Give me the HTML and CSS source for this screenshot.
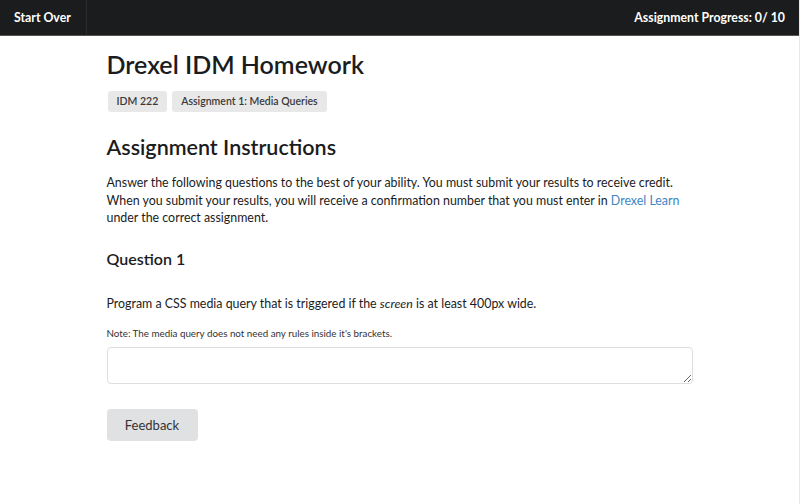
FILE: index.html
```html
<!DOCTYPE html>
<html>
<head>
<meta charset="utf-8">
<link rel="stylesheet" href="styles.css">
</head>
<body>
<nav class="topbar">
  <a class="nav-item start">Start Over</a>
  <div class="nav-item progress">Assignment Progress: 0/ 10</div>
</nav>
<main class="container">
  <h1 class="title">Drexel IDM Homework</h1>
  <div class="tags">
    <span class="tag">IDM 222</span>
    <span class="tag">Assignment 1: Media Queries</span>
  </div>
  <h2 class="section-title">Assignment Instructions</h2>
  <p class="intro">Answer the following questions to the best of your ability. You must submit your results to receive credit. When you submit your results, you will receive a confirmation number that you must enter in <a class="link">Drexel Learn</a> under the correct assignment.</p>
  <h3 class="question-title">Question 1</h3>
  <p class="question">Program a CSS media query that is triggered if the <em>screen</em> is at least 400px wide.</p>
  <p class="note">Note: The media query does not need any rules inside it's brackets.</p>
  <textarea class="answer"></textarea>
  <button class="btn">Feedback</button>
</main>
</body>
</html>
```

FILE: styles.css
```css
* { box-sizing: border-box; }
html, body { margin: 0; padding: 0; }
body {
  font-family: Lato, "Open Sans", "Liberation Sans", sans-serif;
  color: #1b1c1d;
  background: #fff;
  border-right: 1px solid #e8e8e8;
  min-height: 504px;
}
.topbar {
  display: flex;
  justify-content: space-between;
  align-items: stretch;
  height: 36px;
  background: #1b1c1d;
  border-bottom: 1px solid #555;
}
.nav-item {
  display: flex;
  align-items: center;
  color: #fff;
  font-weight: 700;
  font-size: 12.3px;
  white-space: nowrap;
}
.start {
  padding: 0 14px;
  width: 87px;
  border-right: 1px solid #2a2b2c;
}
.progress { padding: 0 14px; }
.container {
  width: 586px;
  margin: 0 auto;
  padding-top: 13px;
}
.title {
  margin: 0;
  font-size: 25px;
  font-weight: 600;
  line-height: 30px;
}
.tags {
  display: flex;
  gap: 5px;
  margin-top: 12px;
  margin-left: 1px;
}
.tag {
  background: #e8e8e8;
  color: #3a3a3a;
  font-size: 10.5px;
  font-weight: 600;
  line-height: 13px;
  padding: 4px 9px;
  border-radius: 3px;
}
.section-title {
  margin: 21px 0 0;
  font-size: 21.5px;
  font-weight: 600;
  line-height: 28px;
}
.intro {
  margin: 13px 0 0;
  font-size: 12.4px;
  line-height: 17.7px;
}
.link { color: #4183c4; }
.question-title {
  margin: 22px 0 0;
  font-size: 16px;
  font-weight: 600;
  line-height: 20px;
}
.question {
  margin: 26px 0 0;
  font-size: 12.4px;
  line-height: 18px;
}
.note {
  margin: 14px 0 0;
  font-size: 9.8px;
  line-height: 12px;
  color: #333;
}
.answer {
  display: block;
  width: 586px;
  height: 37px;
  margin-top: 8px;
  border: 1px solid #dedede;
  border-radius: 4px;
  font-family: inherit;
  resize: vertical;
}
.btn {
  display: block;
  margin-top: 25px;
  width: 91px;
  height: 32px;
  border: none;
  border-radius: 4px;
  background: #e0e1e2;
  color: #333;
  font-family: inherit;
  font-size: 13px;
  font-weight: 400;
}
```
